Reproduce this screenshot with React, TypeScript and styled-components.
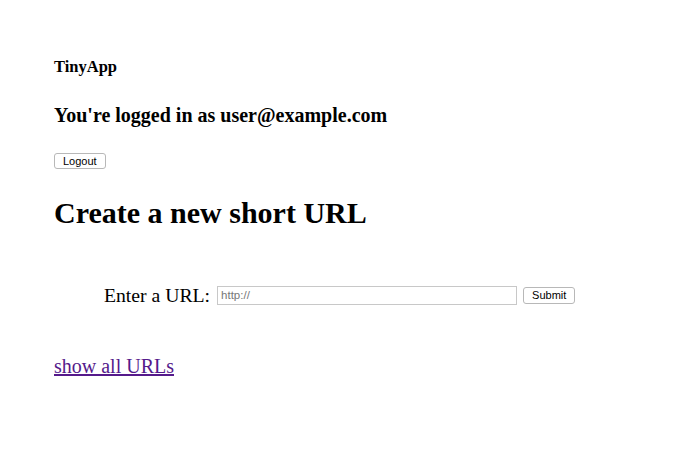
import React from "react";
import styled, { createGlobalStyle } from "styled-components";

const Global = createGlobalStyle`
  html, body { margin: 0; padding: 0; background: #fff; }
  body { font-family: "Liberation Serif", "Times New Roman", serif; color: #000; }
`;

const Page = styled.div`
  padding: 58px 54px 0 54px;
  display: flex;
  flex-direction: column;
  align-items: flex-start;
`;

const Brand = styled.div`
  font-size: 16.5px;
  font-weight: bold;
  line-height: 18px;
`;

const LoggedIn = styled.h3`
  margin: 28px 0 0 0;
  font-size: 20px;
  font-weight: bold;
  line-height: 23px;
`;

const SmallButton = styled.button<{ $h?: number }>`
  font-family: "Liberation Sans", Arial, sans-serif;
  font-size: 11px;
  line-height: 13px;
  color: #000;
  background: #fff;
  border: 1px solid #b8b8b8;
  border-radius: 3px;
  padding: 1px 8px;
  height: ${(p) => p.$h ?? 16}px;
  cursor: pointer;
`;

const LogoutWrap = styled.div`
  margin-top: 26px;
  display: flex;
`;

const Title = styled.h1`
  margin: 26px 0 0 0;
  font-size: 30px;
  font-weight: bold;
  line-height: 35px;
`;

const Form = styled.form`
  margin: 54px 0 0 50px;
  height: 22px;
  display: flex;
  align-items: center;
  gap: 6px;
`;

const Label = styled.label`
  font-size: 19.7px;
  line-height: 22px;
  margin-right: 1px;
`;

const UrlInput = styled.input`
  width: 300px;
  height: 19px;
  box-sizing: border-box;
  border: 1px solid #c8c8c8;
  font-family: "Liberation Sans", Arial, sans-serif;
  font-size: 11.5px;
  padding: 0 3px;
  &::placeholder { color: #777; }
`;

const AllLink = styled.a`
  margin-top: 49px;
  font-size: 20px;
  line-height: 23px;
  color: #551a8b;
  text-decoration: underline;
`;

export default function App() {
  return (
    <>
      <Global />
      <Page>
        <Brand>TinyApp</Brand>
        <LoggedIn>You're logged in as user@example.com</LoggedIn>
        <LogoutWrap>
          <SmallButton type="button">Logout</SmallButton>
        </LogoutWrap>
        <Title>Create a new short URL</Title>
        <Form onSubmit={(e) => e.preventDefault()}>
          <Label htmlFor="longURL">Enter a URL:</Label>
          <UrlInput id="longURL" type="text" placeholder="http://" />
          <SmallButton type="submit" $h={17}>Submit</SmallButton>
        </Form>
        <AllLink href="#">show all URLs</AllLink>
      </Page>
    </>
  );
}
